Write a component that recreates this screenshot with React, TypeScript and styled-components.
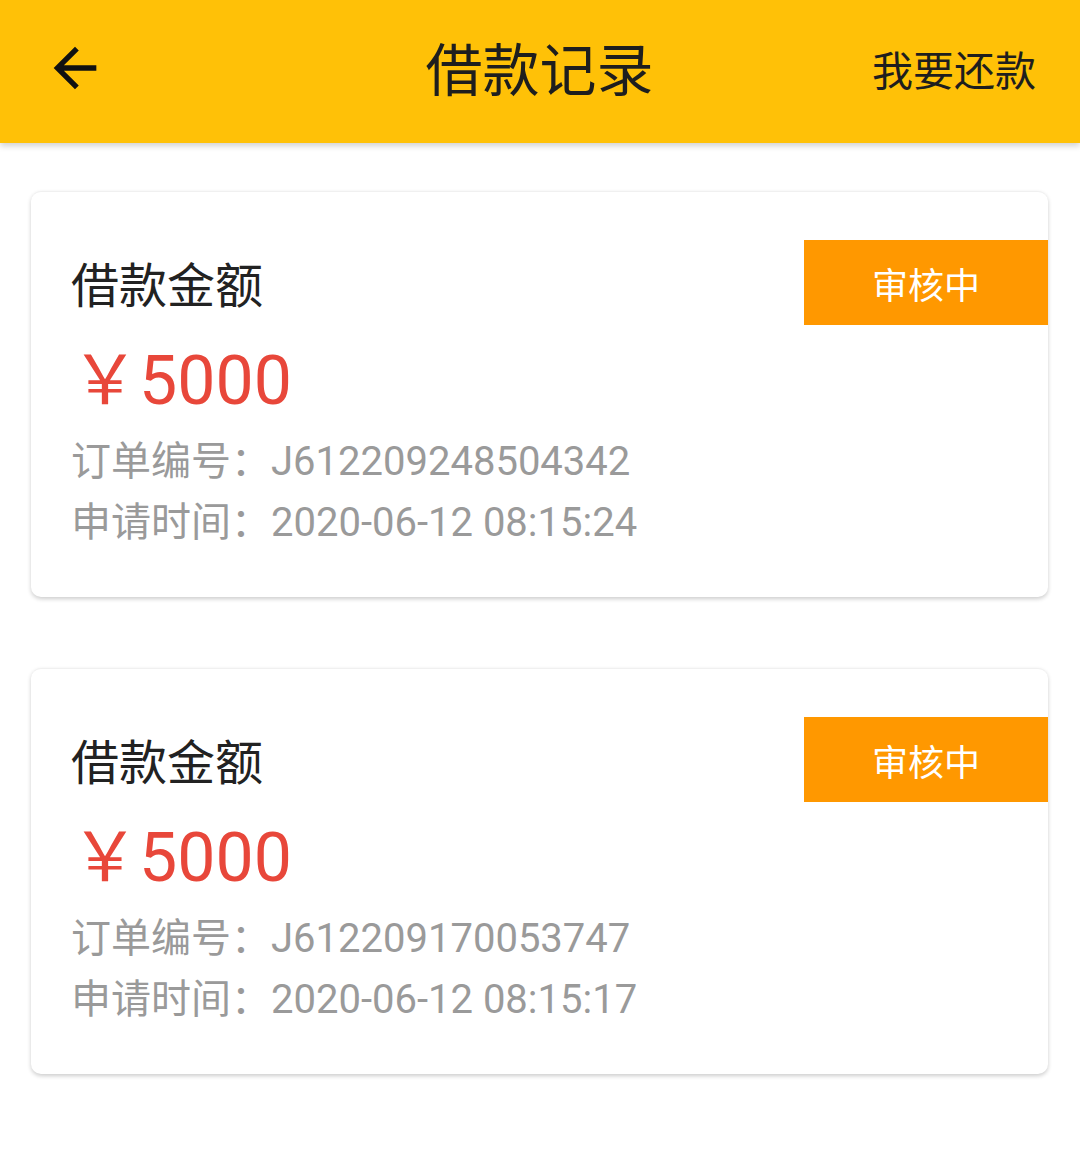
import styled, { createGlobalStyle } from "styled-components";

const GlobalStyle = createGlobalStyle`
  html, body {
    margin: 0;
    padding: 0;
    background: #fff;
  }
  body {
    font-family: Roboto, "Noto Sans CJK SC", sans-serif;
  }
`;

const records = [
  { amount: 5000, order: "J612209248504342", time: "2020-06-12 08:15:24", status: "审核中" },
  { amount: 5000, order: "J612209170053747", time: "2020-06-12 08:15:17", status: "审核中" },
];

const Page = styled.div`
  width: 1080px;
  min-height: 1168px;
  background: #fff;
`;

const Header = styled.header`
  height: 143px;
  background: #ffc107;
  display: grid;
  grid-template-columns: 1fr auto 1fr;
  align-items: center;
  padding: 0 44px 0 43px;
  box-sizing: border-box;
  box-shadow: 0 3px 6px rgba(0, 0, 0, 0.18);
  position: relative;
  z-index: 1;
`;

const BackButton = styled.button`
  justify-self: start;
  width: 64px;
  height: 64px;
  padding: 0;
  margin-top: -7px;
  border: none;
  background: none;
  color: #111;
  display: flex;

  svg {
    width: 64px;
    height: 64px;
  }
`;

const Title = styled.h1`
  margin: -11px 0 0;
  font-family: "Noto Sans CJK SC", sans-serif;
  font-weight: 400;
  font-size: 57px;
  line-height: 1;
  color: #1e1e1e;
`;

const Action = styled.span`
  justify-self: end;
  margin-top: -7px;
  font-family: "Noto Sans CJK SC", sans-serif;
  font-size: 41px;
  color: #1e1e1e;
`;

const List = styled.main`
  display: flex;
  flex-direction: column;
  gap: 71px;
  padding: 48px 32px 0 31px;
`;

const Card = styled.section`
  display: flex;
  justify-content: space-between;
  align-items: flex-start;
  height: 406px;
  box-sizing: border-box;
  background: #fff;
  border-radius: 10px;
  border-top: 1px solid #f0f0f0;
  box-shadow: 0 2px 4px rgba(0, 0, 0, 0.2);
`;

const Info = styled.div`
  display: flex;
  flex-direction: column;
  padding: 54px 0 0 40px;
`;

const Label = styled.div`
  font-family: "Noto Sans CJK SC", sans-serif;
  font-size: 48px;
  line-height: 72px;
  color: #222;
`;

const Amount = styled.div`
  margin-top: 18px;
  font-size: 68px;
  line-height: 90px;
  color: #e8473a;
`;

const Detail = styled.div<{ $first?: boolean }>`
  margin-top: ${(p) => (p.$first ? "5px" : "0")};
  font-size: 40px;
  line-height: 61px;
  color: #9a9a9a;
`;

const Badge = styled.div`
  margin-top: 48px;
  width: 244px;
  height: 85px;
  background: #ff9800;
  color: #fff;
  font-family: "Noto Sans CJK SC", sans-serif;
  font-size: 36px;
  display: flex;
  align-items: center;
  justify-content: center;
`;

export default function App() {
  return (
    <Page>
      <GlobalStyle />
      <Header>
        <BackButton aria-label="返回">
          <svg viewBox="0 0 24 24" fill="currentColor">
            <path d="M20 11H7.83l5.59-5.59L12 4l-8 8 8 8 1.41-1.41L7.83 13H20v-2z" />
          </svg>
        </BackButton>
        <Title>借款记录</Title>
        <Action>我要还款</Action>
      </Header>
      <List>
        {records.map((r) => (
          <Card key={r.order}>
            <Info>
              <Label>借款金额</Label>
              <Amount>￥{r.amount}</Amount>
              <Detail $first>订单编号：{r.order}</Detail>
              <Detail>申请时间：{r.time}</Detail>
            </Info>
            <Badge>{r.status}</Badge>
          </Card>
        ))}
      </List>
    </Page>
  );
}
